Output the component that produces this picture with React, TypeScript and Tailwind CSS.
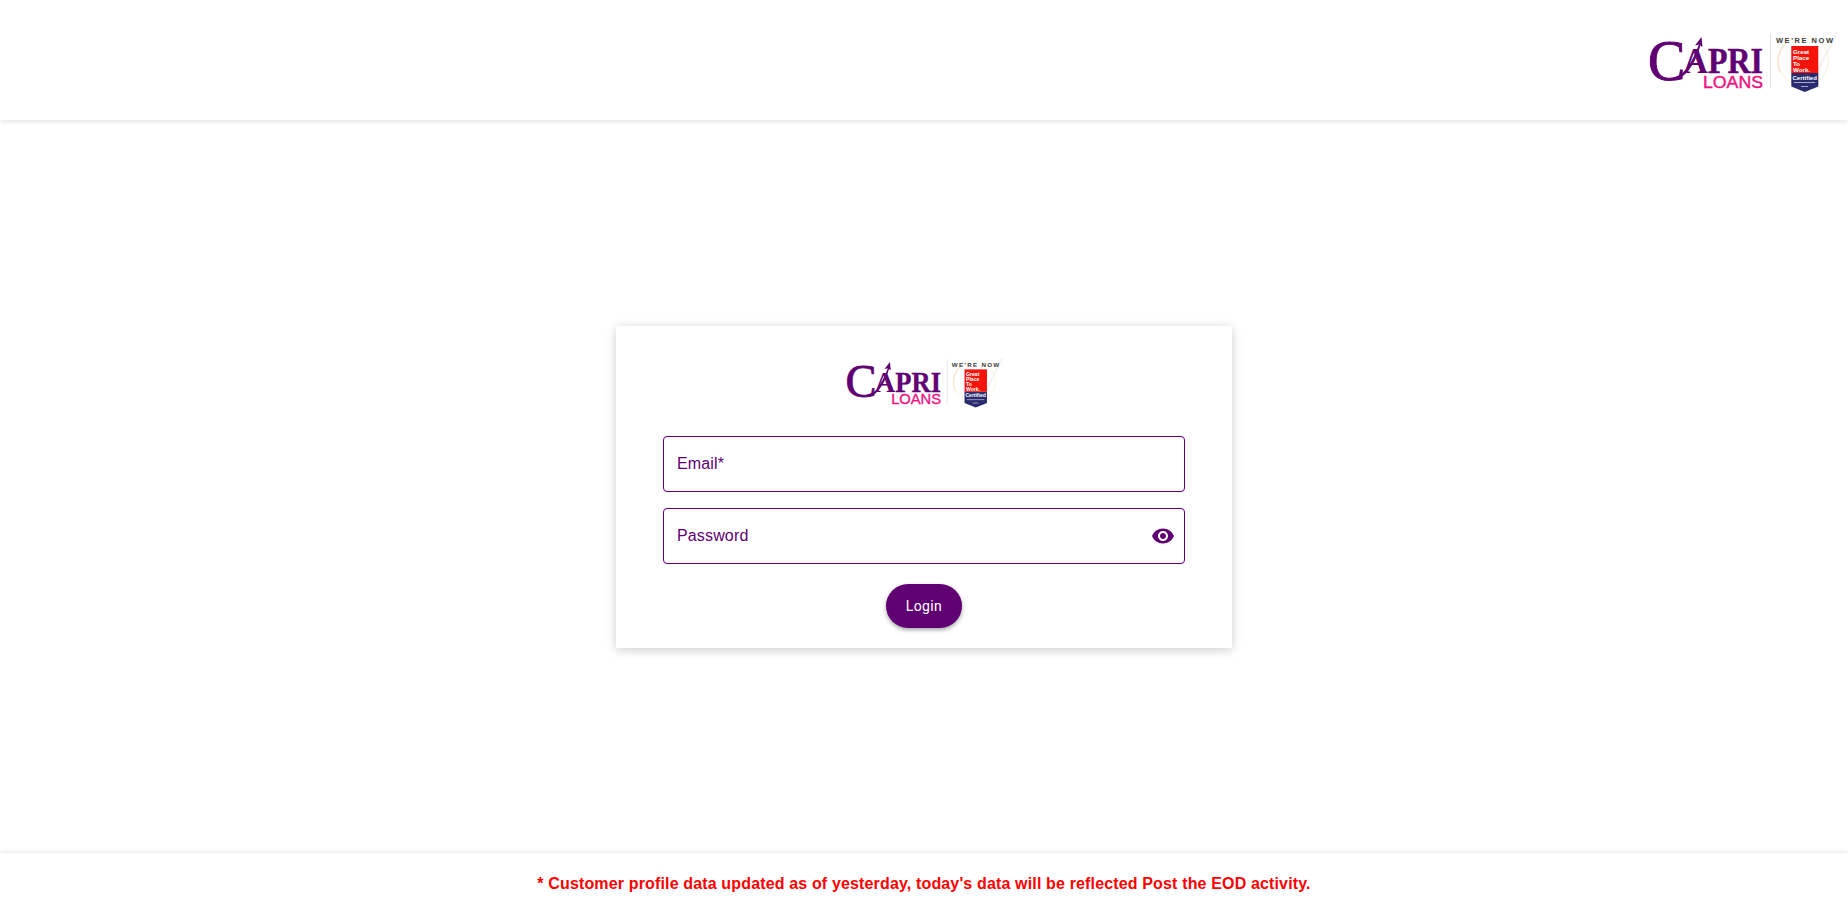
const purple = "#5f0073";

/* ─── Capri Loans + Great Place To Work logo ─── */
function BrandLogo({ width, height }: { width: number; height: number }) {
  return (
    <svg width={width} height={height} viewBox="0 0 195 66" className="block">
      {/* Wordmark */}
      <text x="3" y="49.500" fontFamily="Liberation Serif" fontSize="56" fill={purple} stroke={purple} strokeWidth="1">
        C
      </text>
      <path d="M24 49C36 50 46 36 54.500 13L56 13.500C49 38 38 52 24 49Z" fill={purple} />
      <path d="M56.500 7L57.500 17L54 14.500L50 15.500Z" fill={purple} />
      <text x="38" y="43" fontFamily="Liberation Serif" fontWeight="700" fontSize="35" fill={purple} textLength="25" lengthAdjust="spacingAndGlyphs">
        A
      </text>
      <text x="63" y="43" fontFamily="Liberation Serif" fontWeight="700" fontSize="35" fill={purple} stroke={purple} strokeWidth="0.4" textLength="55" lengthAdjust="spacingAndGlyphs">
        PRI
      </text>
      <text x="58" y="58" fontFamily="Liberation Sans" fontSize="17" fill="#f0107f" stroke="#f0107f" strokeWidth="0.4" textLength="60" lengthAdjust="spacingAndGlyphs">
        LOANS
      </text>
      <rect x="125" y="4" width="0.7" height="54" fill="#d6d6d6" />

      {/* Badge */}
      <path d="M168 50L192 2" stroke="#f3f3f3" strokeWidth="2.500" />
      <circle cx="158.500" cy="31" r="25" fill="none" stroke="#faf2d6" strokeWidth="1" />
      <path d="M135 42A26 26 0 0 1 141 13" fill="none" stroke="#f7e2cf" strokeWidth="1.400" />
      <text x="131" y="12.600" fontFamily="Liberation Sans" fontSize="7.500" fontWeight="700" fill="#3a3a3a" textLength="57">
        WE'RE NOW
      </text>
      <path d="M146.300 43H173.300V56.500L159.800 62L146.300 56.500Z" fill="#2a2a6e" />
      <rect x="146.300" y="16" width="27" height="27" fill="#f5140c" />
      <g fontFamily="Liberation Sans" fontSize="6.200" fontWeight="700" fill="#ffffff">
        <text x="148" y="23.500">Great</text>
        <text x="148" y="29.500">Place</text>
        <text x="148" y="35.500">To</text>
        <text x="148" y="41.500">Work.</text>
        <text x="147.500" y="49.500" fontSize="6">Certified</text>
      </g>
      <rect x="149" y="52" width="21" height="1" fill="#a9a9cc" />
      <rect x="156" y="56" width="7" height="1" fill="#a9a9cc" />
    </svg>
  );
}

/* ─── Outlined text field ─── */
function Field({ placeholder, type, adornment }: { placeholder: string; type: string; adornment?: boolean }) {
  return (
    <div className="flex h-14 items-center rounded-[4px] border border-[#5f0073] pl-[13px] pr-[9px]">
      <input
        type={type}
        placeholder={placeholder}
        className="min-w-0 flex-1 bg-transparent text-[16px] tracking-[0.15px] text-[#5f0073] outline-none placeholder:text-[#5f0073] placeholder:opacity-100"
      />
      {adornment && <VisibilityIcon />}
    </div>
  );
}

function VisibilityIcon() {
  return (
    <svg width="24" height="24" viewBox="0 0 24 24" fill="#5f0073" className="shrink-0">
      <path d="M12 4.500C7 4.500 2.730 7.610 1 12c1.730 4.390 6 7.500 11 7.500s9.270-3.110 11-7.500c-1.730-4.390-6-7.500-11-7.500zM12 17c-2.760 0-5-2.240-5-5s2.240-5 5-5 5 2.240 5 5-2.240 5-5 5zm0-8c-1.660 0-3 1.340-3 3s1.340 3 3 3 3-1.340 3-3-1.340-3-3-3z" />
    </svg>
  );
}

export default function App() {
  return (
    <div className="flex h-[914px] flex-col overflow-hidden bg-white font-['Liberation_Sans',sans-serif]">
      {/* Header */}
      <header className="z-10 flex h-[120px] shrink-0 items-center justify-end bg-white pr-2 pt-[6px] shadow-[0_2px_4px_rgba(0,0,0,0.1)]">
        <BrandLogo width={195} height={66} />
      </header>

      {/* Login card */}
      <main className="flex flex-1 items-center justify-center pt-[1px]">
        <div className="flex h-[322px] w-[616px] flex-col bg-white px-[47px] pb-5 pt-[30px] shadow-[0_2px_10px_rgba(0,0,0,0.2)]">
          <div className="mb-[25px] flex justify-center">
            <BrandLogo width={162} height={55} />
          </div>
          <div className="flex flex-col gap-4">
            <Field type="email" placeholder="Email*" />
            <Field type="password" placeholder="Password" adornment />
          </div>
          <button className="mt-5 h-11 w-[76px] self-center rounded-[22px] bg-[#5f0073] font-['Roboto',sans-serif] text-[14px] tracking-[0.4px] text-white shadow-[0_2px_4px_rgba(0,0,0,0.35)]">
            Login
          </button>
        </div>
      </main>

      {/* Footer note */}
      <footer className="flex h-[61px] shrink-0 items-center justify-center bg-white shadow-[0_-1px_4px_rgba(0,0,0,0.1)]">
        <p className="text-[16px] font-bold tracking-[0.15px] text-[#ff0000]">
          * Customer profile data updated as of yesterday, today's data will be reflected Post the EOD activity.
        </p>
      </footer>
    </div>
  );
}
